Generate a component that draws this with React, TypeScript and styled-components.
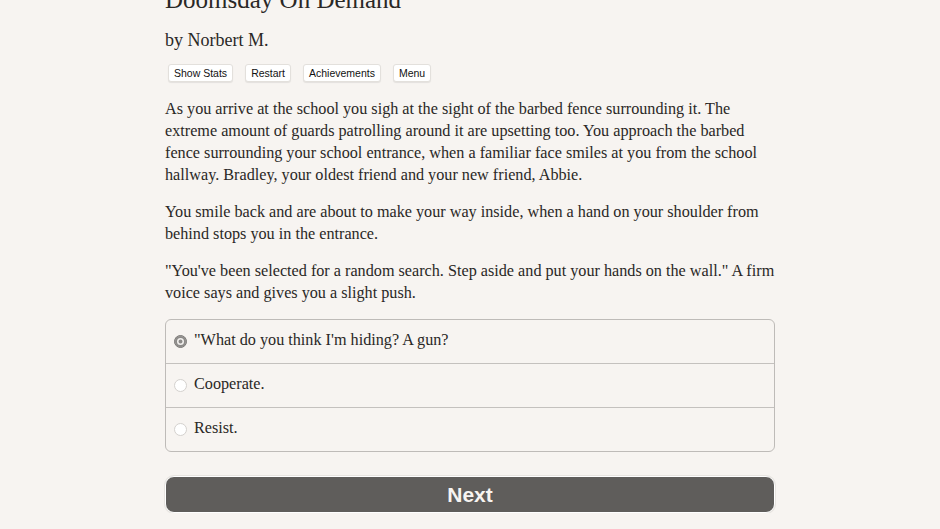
import React, { useState } from 'react';
import styled, { createGlobalStyle } from 'styled-components';

const GlobalStyle = createGlobalStyle`
    html, body {
        margin: 0;
        padding: 0;
        background: #f7f4f1;
    }
    body {
        font-family: "Liberation Serif", "Times New Roman", serif;
        color: #2a2826;
        overflow: hidden;
    }
`;

const Page = styled.div`
    width: 610px;
    margin: 0 auto;
`;

const Title = styled.h1`
    font-weight: normal;
    font-size: 25px;
    line-height: 30px;
    margin: -15px 0 0 0;
    color: #2a2826;
`;

const Author = styled.h2`
    font-weight: normal;
    font-size: 18px;
    line-height: 24px;
    margin: 13px 0 0 0;
`;

const Toolbar = styled.div`
    display: flex;
    gap: 12px;
    margin: 12px 0 0 3px;
`;

const ToolButton = styled.button`
    font-family: "Liberation Sans", Arial, sans-serif;
    font-size: 10.5px;
    line-height: 14px;
    padding: 1px 5px;
    background: #fff;
    color: #111;
    border: 1px solid #e3e0dc;
    border-radius: 3px;
    box-shadow: 0 1px 1px rgba(0, 0, 0, 0.08);
    cursor: pointer;
`;

const Text = styled.p`
    font-size: 16.2px;
    line-height: 22px;
    white-space: nowrap;
    margin: 15px 0 0 0;
    &:first-of-type {
        margin-top: 16px;
    }
`;

const Choices = styled.form`
    margin-top: 15px;
    border: 1px solid #bebbb8;
    border-radius: 6px;
    overflow: hidden;
`;

const ChoiceRow = styled.label`
    display: flex;
    align-items: center;
    gap: 7px;
    height: 43px;
    padding: 0 0 3px 8px;
    box-sizing: border-box;
    font-size: 16.2px;
    cursor: pointer;
    & + & {
        height: 44px;
        border-top: 1px solid #c4c1be;
    }
`;

const Radio = styled.span<{ $checked: boolean }>`
    box-sizing: border-box;
    width: 13px;
    height: 13px;
    margin-top: 2px;
    border-radius: 50%;
    background: ${(p) => (p.$checked ? '#8d8b89' : '#fff')};
    border: 1px solid ${(p) => (p.$checked ? '#7d7b79' : '#d4d1ce')};
    box-shadow: ${(p) => (p.$checked ? 'inset 0 0 0 2px #8d8b89, inset 0 0 0 3.5px #f2f0ee' : 'none')};
    flex-shrink: 0;
`;

const NextButton = styled.button`
    display: block;
    width: 100%;
    height: 37px;
    margin-top: 24px;
    background: #5f5d5b;
    color: #f7f4f1;
    border: 1px solid #fff;
    border-radius: 9px;
    box-shadow: 0 0 0 1px #e7e4e0;
    font-family: "Liberation Sans", Arial, sans-serif;
    font-weight: bold;
    font-size: 21px;
    cursor: pointer;
`;

const options = ['"What do you think I\'m hiding? A gun?', 'Cooperate.', 'Resist.'];

const App: React.FC = () => {
    const [selected, setSelected] = useState(0);

    return (
        <>
            <GlobalStyle />
            <Page>
                <Title>Doomsday On Demand</Title>
                <Author>by Norbert M.</Author>
                <Toolbar>
                    <ToolButton>Show Stats</ToolButton>
                    <ToolButton>Restart</ToolButton>
                    <ToolButton>Achievements</ToolButton>
                    <ToolButton>Menu</ToolButton>
                </Toolbar>
                <Text>
                    As you arrive at the school you sigh at the sight of the barbed fence surrounding it. The
                    <br />
                    extreme amount of guards patrolling around it are upsetting too. You approach the barbed
                    <br />
                    fence surrounding your school entrance, when a familiar face smiles at you from the school
                    <br />
                    hallway. Bradley, your oldest friend and your new friend, Abbie.
                </Text>
                <Text>
                    You smile back and are about to make your way inside, when a hand on your shoulder from
                    <br />
                    behind stops you in the entrance.
                </Text>
                <Text>
                    "You've been selected for a random search. Step aside and put your hands on the wall." A firm
                    <br />
                    voice says and gives you a slight push.
                </Text>
                <Choices>
                    {options.map((o, i) => (
                        <ChoiceRow key={o} onClick={() => setSelected(i)}>
                            <Radio $checked={selected === i} />
                            {o}
                        </ChoiceRow>
                    ))}
                </Choices>
                <NextButton type="button">Next</NextButton>
            </Page>
        </>
    );
};

export default App;
